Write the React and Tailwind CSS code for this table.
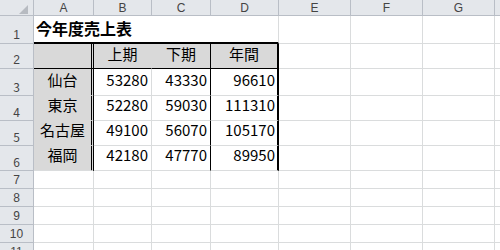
import React from "react";

const GRID = "border-[#dadcdd]";
const JP = { fontFamily: "" };

function Hdr({ w, children }) {
  return (
    <div className={`${w} shrink-0 h-full flex items-end justify-center pb-[1px] border-r border-b border-[#b9bec6] bg-[#e4e7eb] text-[12px] leading-none text-[#444]`}>
      {children}
    </div>
  );
}

function RowNum({ children }) {
  return (
    <div className="w-[34px] shrink-0 h-full flex items-end justify-center pb-[2px] border-r border-b border-[#b9bec6] bg-[#e4e7eb] text-[12px] leading-none text-[#444]">
      {children}
    </div>
  );
}

function Empty({ w }) {
  return <div className={`${w} shrink-0 h-full border-r border-b ${GRID}`} />;
}

const REST = ["w-[72px]", "w-[72px]", "w-[72px]", "w-[72px]"];

function DataRow({ h, n, name, b, c, d, last }) {
  return (
    <div className={`flex ${h}`}>
      <RowNum>{n}</RowNum>
      <div className={`w-[60px] shrink-0 h-full flex items-end justify-center pb-[8px] bg-[#d9d9d9] border-r-[3px] border-double border-r-black border-b ${last ? "border-b-[#dadcdd]" : "border-b-[#d9d9d9]"}`}>
        {name}
      </div>
      <div className={`w-[58px] shrink-0 h-full flex items-end justify-end pr-[3px] pb-[8px] border-r border-b ${GRID}`}>{b}</div>
      <div className={`w-[59px] shrink-0 h-full flex items-end justify-end pr-[3px] pb-[8px] border-r border-b border-[#dadcdd] border-r-black`}>{c}</div>
      <div className={`w-[68px] shrink-0 h-full flex items-end justify-end pr-[2px] pb-[8px] border-r-2 border-b border-[#dadcdd] border-r-black`}>{d}</div>
      {REST.map((w, i) => (
        <Empty key={i} w={w} />
      ))}
    </div>
  );
}

export default function App() {
  const rows = [
    { h: "h-[27px]", n: "3", name: "仙台", b: "53280", c: "43330", d: "96610" },
    { h: "h-[25px]", n: "4", name: "東京", b: "52280", c: "59030", d: "111310" },
    { h: "h-[25px]", n: "5", name: "名古屋", b: "49100", c: "56070", d: "105170" },
    { h: "h-[25px]", n: "6", name: "福岡", b: "42180", c: "47770", d: "89950", last: true },
  ];
  return (
    <div
      className="w-[500px] h-[250px] overflow-hidden bg-white text-black text-[15px] leading-none"
      style={{ fontFamily: '"Noto Sans CJK JP", "Noto Sans", sans-serif' }}
    >
      {/* column headers */}
      <div className="flex h-[16px]" style={{ fontFamily: '"Liberation Sans", Arial, sans-serif' }}>
        <div className="w-[34px] shrink-0 h-full flex items-end justify-end pr-[5px] pb-[1px] border-r border-b border-[#b9bec6] bg-[#e4e7eb]">
          <svg width="9" height="9" viewBox="0 0 9 9">
            <polygon points="9,0 9,9 0,9" fill="#b7bbc1" />
          </svg>
        </div>
        <Hdr w="w-[60px]">A</Hdr>
        <Hdr w="w-[58px]">B</Hdr>
        <Hdr w="w-[59px]">C</Hdr>
        <Hdr w="w-[68px]">D</Hdr>
        <Hdr w="w-[72px]">E</Hdr>
        <Hdr w="w-[72px]">F</Hdr>
        <Hdr w="w-[72px]">G</Hdr>
        <Hdr w="w-[72px]"></Hdr>
      </div>

      {/* row 1 */}
      <div className="flex h-[28px]">
        <div style={{ fontFamily: '"Liberation Sans", Arial, sans-serif' }} className="contents">
          <RowNum>1</RowNum>
        </div>
        <div className="w-[60px] shrink-0 h-full flex items-end pl-[2px] pb-[6px] border-b-2 border-b-black">
          <span className="whitespace-nowrap font-bold text-[16px]">今年度売上表</span>
        </div>
        <div className="w-[58px] shrink-0 h-full border-b-2 border-b-black" />
        <div className="w-[59px] shrink-0 h-full border-b-2 border-b-black" />
        <div className={`w-[68px] shrink-0 h-full border-r border-b-2 ${GRID} border-b-black`} />
        {REST.map((w, i) => (
          <Empty key={i} w={w} />
        ))}
      </div>

      {/* row 2 */}
      <div className="flex h-[25px]">
        <div style={{ fontFamily: '"Liberation Sans", Arial, sans-serif' }} className="contents">
          <RowNum>2</RowNum>
        </div>
        <div className="w-[60px] shrink-0 h-full bg-[#d9d9d9] border-r-[3px] border-double border-r-black border-b border-b-black" />
        <div className="w-[58px] shrink-0 h-full flex items-end justify-center pb-[7px] bg-[#d9d9d9] border-r border-b border-r-[#d9d9d9] border-b-black">上期</div>
        <div className="w-[59px] shrink-0 h-full flex items-end justify-center pb-[7px] bg-[#d9d9d9] border-r border-b border-black">下期</div>
        <div className="w-[68px] shrink-0 h-full flex items-end justify-center pb-[7px] bg-[#d9d9d9] border-r-2 border-b border-black">年間</div>
        {REST.map((w, i) => (
          <Empty key={i} w={w} />
        ))}
      </div>

      {rows.map((r) => (
        <div key={r.n} style={{}} className="contents">
          <DataRowWrap {...r} />
        </div>
      ))}

      {["7", "8", "9", "10", "11"].map((n) => (
        <div key={n} className="flex h-[18px]">
          <div style={{ fontFamily: '"Liberation Sans", Arial, sans-serif' }} className="contents">
            <RowNum>{n}</RowNum>
          </div>
          <Empty w="w-[60px]" />
          <Empty w="w-[58px]" />
          <Empty w="w-[59px]" />
          <Empty w="w-[68px]" />
          {REST.map((w, i) => (
            <Empty key={i} w={w} />
          ))}
        </div>
      ))}
    </div>
  );
}

function DataRowWrap(props) {
  return <DataRow {...props} />;
}
